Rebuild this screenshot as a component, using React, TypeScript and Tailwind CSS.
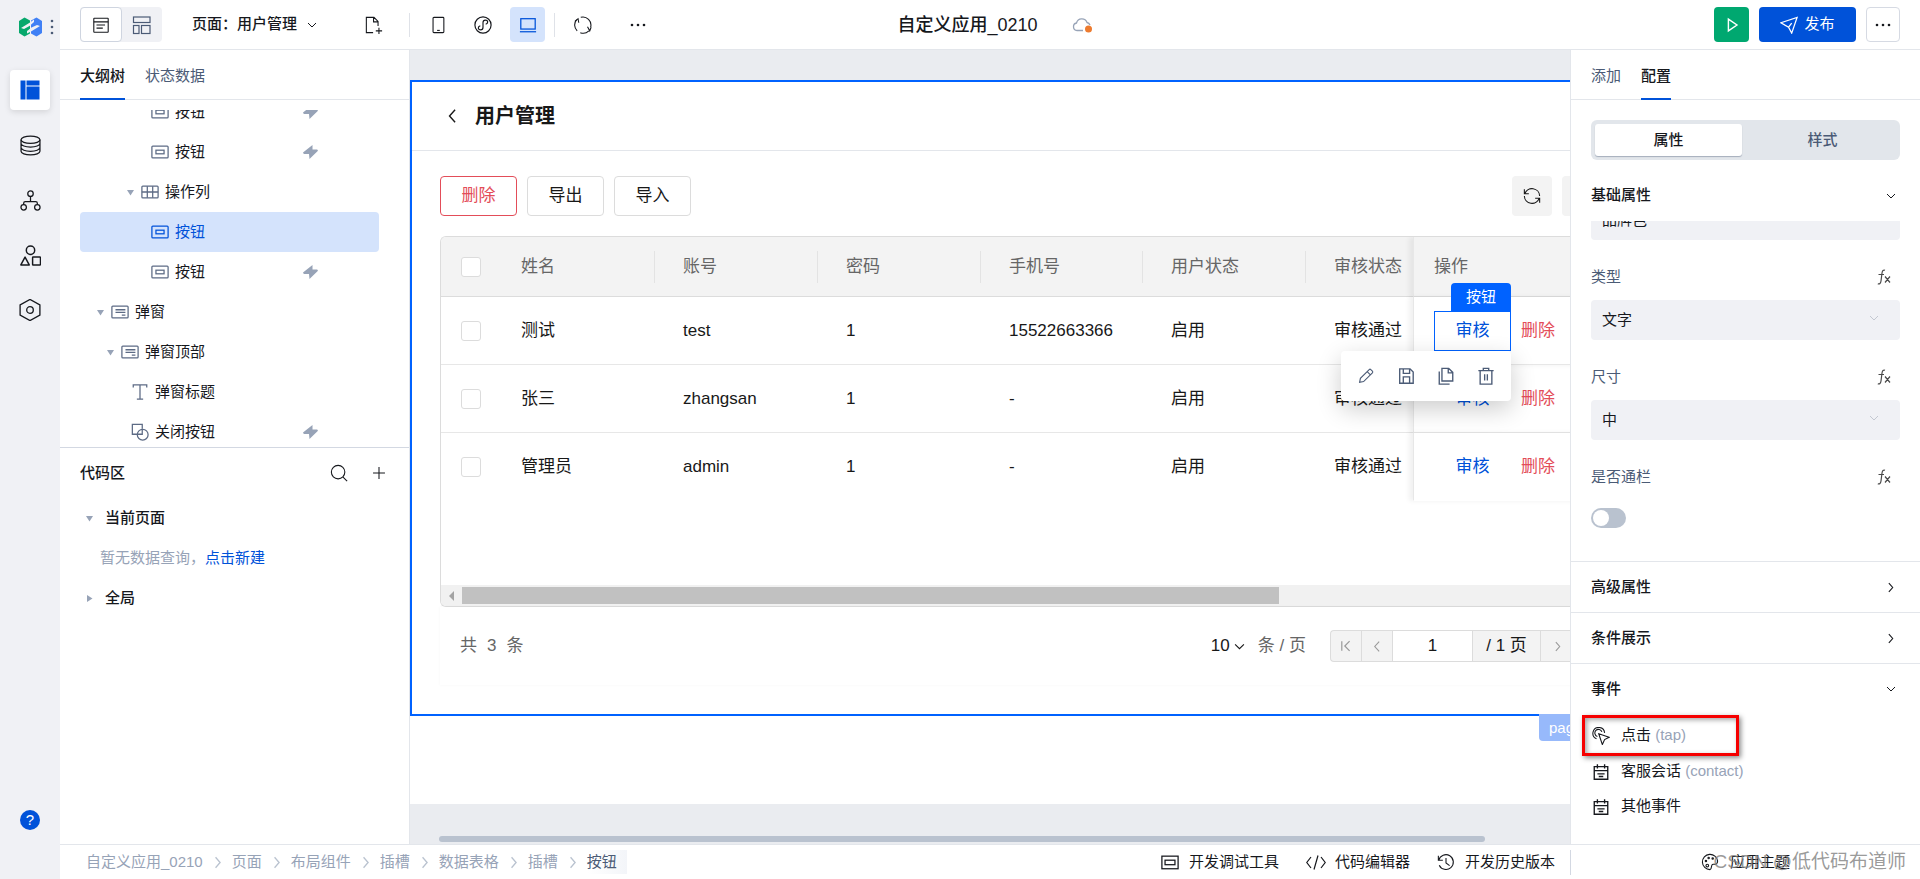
import { ReactNode } from "react";

type IconProps = {
  size?: number;
  width?: number;
  className?: string;
  children: ReactNode;
};

// every drawing uses a 20x20 canvas
function Icon({ size = 20, width = 1.2, className = "", children }: IconProps) {
  return (
    <svg
      width={size}
      height={size}
      viewBox="0 0 20 20"
      fill="none"
      stroke="currentColor"
      strokeWidth={width}
      className={`shrink-0 ${className}`}
      aria-hidden="true"
    >
      {children}
    </svg>
  );
}

function Chevron({ dir, size = 12, className = "" }: { dir: "down" | "right" | "left"; size?: number; className?: string }) {
  const paths = {
    down: "M2 6l8 8 8-8",
    right: "M7 2l7 8-7 8",
    left: "M13 1l-8 9 8 9",
  };
  return (
    <Icon size={size} width={2} className={className}>
      <path d={paths[dir]} />
    </Icon>
  );
}

const treeIcons: Record<string, ReactNode> = {
  button: (
    <>
      <rect x="1" y="3.500" width="18" height="13" rx="1" />
      <rect x="5.500" y="8" width="9" height="4" />
    </>
  ),
  table: (
    <>
      <rect x="1" y="3.500" width="18" height="13" rx="1" />
      <path d="M1 10h18M7 3.500v13M13 3.500v13" />
    </>
  ),
  modal: (
    <>
      <rect x="1" y="3.500" width="18" height="13" rx="1" />
      <path d="M5 7.500h11M5 10.500h11M12 13.500h4" />
    </>
  ),
  text: <path d="M2.500 5V2h15v3M10 2v16M6.500 18h7" />,
  shape: (
    <>
      <path d="M7 12.500H1.500v-11h11v5" />
      <circle cx="13" cy="13" r="6" />
      <path d="M7 12.500h5.500v-6" />
    </>
  ),
};

type TreeRow = {
  indent: string;
  icon: string;
  label: string;
  open?: boolean;
  event?: boolean;
  active?: boolean;
};

const treeRows: TreeRow[] = [
  { indent: "pl-[57px]", icon: "button", label: "按钮", event: true },
  { indent: "pl-[57px]", icon: "button", label: "按钮", event: true },
  { indent: "pl-[47px]", icon: "table", label: "操作列", open: true },
  { indent: "pl-[57px]", icon: "button", label: "按钮", active: true },
  { indent: "pl-[57px]", icon: "button", label: "按钮", event: true },
  { indent: "pl-[17px]", icon: "modal", label: "弹窗", open: true },
  { indent: "pl-[27px]", icon: "modal", label: "弹窗顶部", open: true },
  { indent: "pl-[37px]", icon: "text", label: "弹窗标题" },
  { indent: "pl-[37px]", icon: "shape", label: "关闭按钮", event: true },
];

const users = [
  { name: "测试", account: "test", password: "1", phone: "15522663366", status: "启用", audit: "审核通过" },
  { name: "张三", account: "zhangsan", password: "1", phone: "-", status: "启用", audit: "审核通过" },
  { name: "管理员", account: "admin", password: "1", phone: "-", status: "启用", audit: "审核通过" },
];

const columns = ["姓名", "账号", "密码", "手机号", "用户状态"];
const crumbs = ["自定义应用_0210", "页面", "布局组件", "插槽", "数据表格", "插槽"];

function Triangle({ open }: { open: boolean }) {
  return (
    <svg width="7" height="7" viewBox="0 0 7 7" className="shrink-0 fill-[#97a3b7]" aria-hidden="true">
      <path d={open ? "M0 1h7L3.500 6.500z" : "M1 0v7l5.500-3.500z"} />
    </svg>
  );
}

function Rail() {
  const item = "flex h-10 w-10 items-center justify-center rounded text-[#16181d]";
  return (
    <nav className="flex w-[60px] shrink-0 flex-col items-center bg-[#f0f1f5] pb-[13px]">
      <div className="flex h-[54px] w-full items-center pl-[19px]">
        <svg width="23" height="20" viewBox="0 0 23 20" aria-hidden="true">
          <path d="M0 4L5.500 .5 11 3.500v13l-5.500 3L0 16z" fill="#07a86c" />
          <path d="M12 16.500v-13l5.500-3L23 4v12l-5.500 3.500z" fill="#4080f5" />
          <path d="M2 11L11 5.500 15 2.500v2.500L10.500 9 5 12z" fill="#f0f1f5" />
          <path d="M8 16.500v-2.500L12.500 10.500 18 8l3 1-9 5.500z" fill="#f0f1f5" />
        </svg>
        <svg width="4" height="16" viewBox="0 0 4 16" className="ml-[8px] fill-[#4b5b76]" aria-hidden="true">
          <circle cx="2" cy="2" r="1.300" />
          <circle cx="2" cy="8" r="1.300" />
          <circle cx="2" cy="14" r="1.300" />
        </svg>
      </div>
      <div className="mt-4 flex flex-col gap-[15px]">
        <button aria-label="页面设计" className="flex h-10 w-10 items-center justify-center rounded bg-white shadow-[0_2px_6px_rgba(0,0,0,0.12)]">
          <svg width="20" height="20" viewBox="0 0 20 20" className="fill-[#0052d9]" aria-hidden="true">
            <path d="M.5.5h5v19h-5zM6.500.5h13v5h-13zM6.500 6.500h13v13h-13z" />
          </svg>
        </button>
        <button aria-label="数据源" className={item}>
          <Icon size={21}>
            <ellipse cx="10" cy="4.500" rx="9" ry="3.500" />
            <path d="M1 4.500v11c0 2 4 3.500 9 3.500s9-1.500 9-3.500v-11M1 8c0 2 4 3.500 9 3.500s9-1.500 9-3.500M1 12c0 2 4 3.500 9 3.500s9-1.500 9-3.500" />
          </Icon>
        </button>
        <button aria-label="流程" className={item}>
          <Icon size={21}>
            <circle cx="10" cy="3.500" r="2.600" />
            <circle cx="3.500" cy="16.500" r="2.600" />
            <circle cx="16.500" cy="16.500" r="2.600" />
            <path d="M10 6v5M3.500 14v-1.500Q3.500 11 5 11h10q1.500 0 1.500 1.500V14" />
          </Icon>
        </button>
        <button aria-label="组件" className={item}>
          <Icon size={21} width={1.4}>
            <circle cx="10" cy="5" r="4" />
            <path d="M4.800 11.500L.8 19h8z" strokeLinejoin="round" />
            <rect x="12" y="11.500" width="7.500" height="7.500" rx=".5" />
          </Icon>
        </button>
        <button aria-label="设置" className={item}>
          <Icon size={22}>
            <path d="M10 .4l9 4.900v9.400l-9 4.900-9-4.900V5.300z" />
            <circle cx="10" cy="10" r="3" />
          </Icon>
        </button>
      </div>
      <button aria-label="帮助" className="mt-auto flex h-[92px] w-10 items-center justify-center">
        <span className="flex h-5 w-5 items-center justify-center rounded-full bg-[#0052d9] text-[15px] leading-5 text-white">?</span>
      </button>
    </nav>
  );
}

function Dots() {
  return (
    <svg width="16" height="4" viewBox="0 0 16 4" className="fill-[#16181d]" aria-hidden="true">
      <circle cx="2" cy="2" r="1.300" />
      <circle cx="8" cy="2" r="1.300" />
      <circle cx="14" cy="2" r="1.300" />
    </svg>
  );
}

function TopBar() {
  const tool = "flex h-[35px] w-[35px] items-center justify-center rounded";
  return (
    <header className="flex h-[50px] shrink-0 items-center border-b border-[#e3e6eb] px-5">
      <div className="flex flex-1 items-center">
        <div className="flex rounded bg-[#f0f1f5]">
          <button aria-label="编辑" className="flex h-[35px] w-[42px] items-center justify-center rounded border border-[#cfd5e0] bg-white">
            <Icon size={18}>
              <rect x="2" y="2.500" width="16" height="15.500" rx=".5" />
              <path d="M2 6.500h16M5 10h9.500M5 13.500h7" />
            </Icon>
          </button>
          <button aria-label="布局" className="flex h-[35px] w-10 items-center justify-center text-[#4b5b76]">
            <Icon size={20}>
              <rect x="1.500" y="2" width="16.500" height="5.500" />
              <rect x="1.500" y="10.500" width="5.500" height="8" />
              <rect x="9.500" y="10.500" width="8.500" height="8" />
            </Icon>
          </button>
        </div>
        <button className="ml-[30px] flex items-center gap-[10px] text-[15px] font-medium">
          页面：用户管理
          <Chevron dir="down" size={10} />
        </button>
        <button aria-label="新建页面" className="ml-[39px] flex h-[35px] w-[35px] items-center justify-center">
          <Icon size={18}>
            <path d="M9 18.500H1.500v-17h8.500l4.500 4.500v5M9.500 1.500v5h5M15.500 13v7M12 16.500h7" />
          </Icon>
        </button>
        <span className="ml-[18px] h-6 w-px bg-[#dfe2e8]" />
        <button aria-label="手机" className={`ml-[10px] ${tool}`}>
          <Icon size={18}>
            <rect x="4.500" y="1.500" width="12" height="17" rx="1" />
            <path d="M9 16h3" />
          </Icon>
        </button>
        <button aria-label="小程序" className={`ml-[10px] ${tool}`}>
          <Icon size={18} width={1.300}>
            <circle cx="10" cy="10" r="9" />
            <path d="M10 7.500c0-1.800 1.200-3 2.600-3s2.600 1 2.600 2.300c0 1.400-1 2-2.200 2.400M10 7.500v5c0 1.800-1.200 3-2.600 3S4.800 14.500 4.800 13.200c0-1.400 1-2 2.200-2.400" />
          </Icon>
        </button>
        <button aria-label="电脑" className={`ml-[10px] bg-[#d4e3fc] text-[#0052d9] ${tool}`}>
          <Icon size={18} width={1.400}>
            <rect x="2" y="3" width="16" height="11.500" />
            <path d="M1 17.500h18" />
          </Icon>
        </button>
        <span className="ml-[9px] h-6 w-px bg-[#dfe2e8]" />
        <button aria-label="刷新" className={`ml-[10px] ${tool}`}>
          <Icon size={18}>
            <path d="M3.500 16.500A9 9 0 013 4M7.500 1.500a9 9 0 0111 11M16.500 16.500a9 9 0 01-9.500 2" />
            <path d="M1 6l3.500-3 .8 4.500M15 12l2.500 4.500 1.500-4" />
          </Icon>
        </button>
        <button aria-label="更多工具" className={`ml-5 ${tool}`}>
          <Dots />
        </button>
      </div>
      <div className="flex items-center gap-[34px] pl-[10px]">
        <h1 className="text-lg leading-6 font-medium">自定义应用_0210</h1>
        <svg width="21" height="18" viewBox="0 0 21 18" aria-hidden="true">
          <path d="M11 14.500H5A3.800 3.800 0 014.500 7 5.500 5.500 0 0115 6.500a4 4 0 013 2.500" fill="none" stroke="#97a3b7" strokeWidth="1.300" />
          <circle cx="16.500" cy="13" r="3.500" fill="#ed7b2f" />
        </svg>
      </div>
      <div className="flex flex-1 items-center justify-end gap-[10px]">
        <button aria-label="预览" className="flex h-[35px] w-[35px] items-center justify-center rounded bg-[#00a870] text-white">
          <Icon size={18} width={1.600}>
            <path d="M6 3.500v13L15.500 10z" />
          </Icon>
        </button>
        <button className="flex h-[35px] w-[97px] items-center justify-center gap-[6px] rounded bg-[#0052d9] text-[15px] text-white">
          <Icon size={18} width={1.400}>
            <path d="M1 7.500L19 1.500 13 19 9.500 12.500zM5 10l4.500 2.500L13 8" />
          </Icon>
          发布
        </button>
        <button aria-label="更多" className="flex h-[35px] w-[34px] items-center justify-center rounded border border-[#d6dae3]">
          <Dots />
        </button>
      </div>
    </header>
  );
}

function OutlinePanel() {
  return (
    <aside className="flex w-[350px] shrink-0 flex-col border-r border-[#e3e6eb]">
      <div className="flex h-[50px] shrink-0 gap-5 border-b border-[#e3e6eb] px-5 text-[15px]">
        <button className="-mb-px border-b-2 border-[#0052d9] pt-1 font-medium">大纲树</button>
        <button className="-mb-px border-b-2 border-transparent pt-1 text-[#4b5b76]">状态数据</button>
      </div>
      <div className="mt-[10px] h-[338px] shrink-0 overflow-hidden border-b border-[#d3d8e2] px-5">
        <ul className="-mt-[18px] w-[299px]">
          {treeRows.map((row, i) => (
            <li
              key={i}
              className={`flex h-10 items-center rounded text-[15px] ${row.indent} ${row.active ? "bg-[#d4e3fc] text-[#0052d9]" : ""}`}
            >
              <span className="w-[14px]">{row.open && <Triangle open />}</span>
              <Icon size={18} width={1.400} className={row.active ? "text-[#0052d9]" : "text-[#5d6b85]"}>
                {treeIcons[row.icon]}
              </Icon>
              <span className="ml-[6px]">{row.label}</span>
              {row.event && (
                <svg width="15" height="14" viewBox="0 0 15 14" className="mr-[61px] ml-auto fill-[#97a3b7]" aria-hidden="true">
                  <path d="M9.500 0L0 7.500l.8 1.500H6L6.500 14 15 5.800l-.8-1.300H9.500z" />
                </svg>
              )}
            </li>
          ))}
        </ul>
      </div>
      <div className="flex-1 px-5 text-[15px]">
        <div className="flex h-[50px] items-center">
          <h2 className="font-medium">代码区</h2>
          <button aria-label="搜索" className="ml-auto">
            <Icon size={18}>
              <circle cx="9" cy="9" r="7.500" />
              <path d="M14.500 14.500l4.500 4.500" />
            </Icon>
          </button>
          <button aria-label="新增" className="mr-[3px] ml-[24px]">
            <Icon size={14} width={1.500}>
              <path d="M10 1.500v17M1.500 10h17" />
            </Icon>
          </button>
        </div>
        <button className="flex h-10 w-full items-center gap-3 pl-[6px] font-medium">
          <Triangle open />
          当前页面
        </button>
        <p className="flex h-10 items-center pl-5 text-[#97a3b7]">
          暂无数据查询，
          <a href="#new" className="text-[#0052d9]">点击新建</a>
        </p>
        <button className="flex h-10 w-full items-center gap-3 pl-[6px] font-medium">
          <Triangle open={false} />
          全局
        </button>
      </div>
    </aside>
  );
}

function SelectedButton() {
  const action = "flex h-10 w-10 items-center justify-center text-[#4b5b76]";
  return (
    <span className="relative z-10 block">
      <button className="flex h-10 w-[77px] items-center justify-center border border-[#0062ff] text-[#0052d9]">审核</button>
      <span className="absolute right-0 bottom-full flex h-7 w-[60px] items-center justify-center rounded-t bg-[#0062ff] text-[15px] text-white">
        按钮
      </span>
      <span className="absolute top-full right-0 flex h-[50px] items-center rounded bg-white px-[5px] shadow-[0_8px_24px_rgba(0,0,0,0.2)]">
        <button aria-label="编辑" className={action}>
          <Icon size={16} width={1.400}>
            <path d="M2 18l1-5L14 2q1-1 2 0l2 2q1 1 0 2L7 17zM11.500 4.500l4 4" />
          </Icon>
        </button>
        <button aria-label="保存" className={action}>
          <Icon size={18} width={1.500}>
            <path d="M3 2h11.500l3.500 3.500v12.500H3zM7 2v5h7v-5M7 18v-7h7v7" />
          </Icon>
        </button>
        <button aria-label="复制" className={action}>
          <Icon size={18} width={1.500}>
            <path d="M5.500 1.500h7.500l4.500 4.500v9.500h-12zM12.500 1.500v5h5M2.500 5v14h11.500" />
          </Icon>
        </button>
        <button aria-label="删除" className={action}>
          <Icon size={18} width={1.500}>
            <path d="M1.500 4h17M7 4V1.500h6V4M3.500 4v15h13V4M8.500 8v7M11.500 8v7" />
          </Icon>
        </button>
      </span>
    </span>
  );
}

function Canvas() {
  const check = "block h-5 w-5 appearance-none rounded-[3px] border border-[#dcdcdc] bg-white";
  const fixed = "relative border-b shadow-[-4px_0_5px_rgba(0,0,0,0.06)] border-l border-l-[#e7e7e7] pl-5";
  const pager = "flex h-full items-center justify-center border-r border-[#dcdcdc]";
  return (
    <main className="flex min-w-0 flex-1 flex-col overflow-hidden bg-[#eaecf0] pt-[30px]">
      <div className="min-h-0 flex-1 bg-white">
        <section className="relative w-[calc(100%+24px)] border-2 border-[#0062ff] pb-[29px] text-[17px] leading-6 text-[#181818]">
          <div className="flex h-[69px] items-center border-b border-[#e3e6eb] pl-[34px]">
            <button aria-label="返回" className="mr-[15px]">
              <Chevron dir="left" size={14} />
            </button>
            <h2 className="text-xl font-bold">用户管理</h2>
          </div>
          <div className="flex gap-[10px] py-[25px] pl-[28px]">
            <button className="h-10 w-[77px] rounded border border-[#e34d59] text-[#e34d59]">删除</button>
            <button className="h-10 w-[77px] rounded border border-[#dcdcdc]">导出</button>
            <button className="h-10 w-[77px] rounded border border-[#dcdcdc]">导入</button>
            <button aria-label="刷新" className="ml-auto flex h-10 w-10 items-center justify-center rounded bg-[#f3f3f3]">
              <Icon size={18}>
                <path d="M1.500 2.500v5h5M18.500 17.500v-5h-5M2 7.500A8.500 8.500 0 0118.500 10M18 12.500A8.500 8.500 0 011.500 10" />
              </Icon>
            </button>
            <button aria-label="列设置" className="-mr-[10px] h-10 w-10 shrink-0 rounded bg-[#f3f3f3]" />
          </div>
          <div className="-mt-[5px] ml-[28px] overflow-hidden rounded-l-md border border-r-0 border-[#dcdcdc]">
            <div className="h-[348px] overflow-hidden">
              <table className="w-full table-fixed border-separate border-spacing-0 text-left">
                <colgroup>
                  <col className="w-[52px]" />
                  <col className="w-[162px]" />
                  <col className="w-[163px]" />
                  <col className="w-[163px]" />
                  <col className="w-[162px]" />
                  <col className="w-[163px]" />
                  <col className="w-[107px]" />
                  <col />
                </colgroup>
                <thead className="bg-[#f3f3f3] text-[#666]">
                  <tr className="h-[60px]">
                    <th className="border-b border-[#dcdcdc] pl-5">
                      <input type="checkbox" aria-label="全选" className={check} />
                    </th>
                    {columns.map((c) => (
                      <th key={c} className="border-b border-[#dcdcdc] font-normal">
                        <div className="border-r border-[#e3e3e3] py-1 pl-[28px]">{c}</div>
                      </th>
                    ))}
                    <th className="border-b border-[#dcdcdc] pl-[28px] font-normal whitespace-nowrap">审核状态</th>
                    <th className={`${fixed} border-b-[#dcdcdc] bg-[#f3f3f3] font-normal`}>操作</th>
                  </tr>
                </thead>
                <tbody>
                  {users.map((u, i) => {
                    const line = i < 2 ? "border-b-[#e7e7e7]" : "border-b-transparent";
                    return (
                      <tr key={u.name} className="h-[68px]">
                        <td className={`border-b pl-5 ${line}`}>
                          <input type="checkbox" aria-label={`选择${u.name}`} className={check} />
                        </td>
                        {[u.name, u.account, u.password, u.phone, u.status, u.audit].map((v, k) => (
                          <td key={k} className={`border-b pl-[28px] whitespace-nowrap ${line}`}>
                            {v}
                          </td>
                        ))}
                        <td className={`${fixed} ${line} bg-white ${i === 0 ? "z-10" : ""}`}>
                          <div className="flex items-center gap-[10px]">
                            {i === 0 ? <SelectedButton /> : <button className="h-10 w-[77px] text-[#0052d9]">审核</button>}
                            <button className="text-[#e34d59]">删除</button>
                          </div>
                        </td>
                      </tr>
                    );
                  })}
                </tbody>
              </table>
            </div>
            <div className="flex h-[21px] items-center bg-[#f1f1f1]">
              <svg width="21" height="10" viewBox="0 0 21 10" className="shrink-0 fill-[#a3a3a3]" aria-hidden="true">
                <path d="M13 0v10L8 5z" />
              </svg>
              <div className="h-[17px] w-[71%] bg-[#c1c1c1]" />
            </div>
          </div>
          <div className="ml-[28px] flex h-[78px] items-center pl-5 text-[#666] shadow-[0_0_3px_rgba(0,0,0,0.04)]">
            <span className="flex gap-[10px]">
              <span>共</span>
              <span>3</span>
              <span>条</span>
            </span>
            <label className="ml-auto flex items-center text-[#666]">
              <span className="relative flex items-center text-[#181818]">
                <select className="w-[34px] appearance-none" aria-label="每页条数" defaultValue="10">
                  <option>10</option>
                </select>
                <Chevron dir="down" size={11} className="pointer-events-none absolute right-0" />
              </span>
              <span className="ml-[13px]">条 / 页</span>
            </label>
            <div className="ml-[24px] flex h-8 shrink-0 items-center rounded-l border border-r-0 border-[#dcdcdc] bg-[#f3f3f3] text-[#181818]">
              <button aria-label="首页" className={`w-[31px] text-[#999] ${pager}`}>
                <Icon size={12} width={2}>
                  <path d="M3 2v16M16 2l-8 8 8 8" />
                </Icon>
              </button>
              <button aria-label="上一页" className={`w-[31px] text-[#999] ${pager}`}>
                <Chevron dir="left" size={11} />
              </button>
              <input aria-label="页码" defaultValue="1" className="h-full w-20 border-r border-[#dcdcdc] bg-white text-center" />
              <span className={`w-[68px] ${pager}`}>/ 1 页</span>
              <button aria-label="下一页" className="flex h-full w-[32px] items-center justify-center text-[#999]">
                <Chevron dir="right" size={11} />
              </button>
              <span className="w-[19px]" />
            </div>
          </div>
          <span className="absolute top-full right-0 flex h-[27px] w-[53px] items-center rounded-bl bg-[#97b9fb] pl-[10px] text-[15px] text-white">
            page
          </span>
        </section>
      </div>
      <div className="flex h-10 shrink-0 items-end pr-[85px] pb-[2px] pl-[29px]">
        <div className="h-[6px] flex-1 rounded-full bg-[#b9c2cf]" />
      </div>
    </main>
  );
}

function Fx() {
  return (
    <svg width="15" height="16" viewBox="0 0 15 16" fill="none" stroke="#4a4a4a" strokeWidth="1.200" aria-hidden="true">
      <path d="M8 1.200Q5.500 .3 5 4L4 12Q3.500 15.500 .8 14.800M1.500 5.500h5.500M8 7.500l5 6M13 7.500l-5 6" />
    </svg>
  );
}

function SelectField({ id, label, value }: { id: string; label: string; value: string }) {
  return (
    <div className="mb-[17px]">
      <div className="flex h-10 items-center justify-between pr-2">
        <label htmlFor={id} className="text-[#4b5b76]">{label}</label>
        <Fx />
      </div>
      <div className="relative mt-[3px]">
        <select id={id} className="h-10 w-full appearance-none rounded bg-[#f0f1f5] px-[11px]">
          <option>{value}</option>
        </select>
        <Chevron dir="down" size={10} className="pointer-events-none absolute top-[13px] right-[21px] text-[#c3c8d1]" />
      </div>
    </div>
  );
}

function EventIcon() {
  return (
    <Icon size={18} width={1.500}>
      <path d="M2.500 4h15v14h-15zM2.500 8.500h15M6 1.500V6M14 1.500V6M6 12h8M7.500 15h5" />
    </Icon>
  );
}

function ConfigPanel() {
  const head = "flex h-[51px] w-full items-center justify-between border-t border-[#e3e6eb] pr-6 pl-5 font-medium";
  return (
    <aside className="flex w-[350px] shrink-0 flex-col overflow-hidden border-l border-[#e3e6eb] text-[15px]">
      <div className="flex h-[50px] shrink-0 gap-5 border-b border-[#e3e6eb] px-5">
        <button className="-mb-px border-b-2 border-transparent pt-1 text-[#4b5b76]">添加</button>
        <button className="-mb-px border-b-2 border-[#0052d9] pt-1 font-medium">配置</button>
      </div>
      <div className="mx-5 mt-5 flex h-10 shrink-0 rounded-md bg-[#e2e6eb] p-1">
        <button className="w-[147px] rounded-[3px] bg-white font-medium shadow-[0_1px_1px_rgba(75,91,118,0.4)]">属性</button>
        <button className="flex-1 pl-[7px] font-medium text-[#4b5b76]">样式</button>
      </div>
      <button className="mt-[10px] flex h-[51px] shrink-0 items-center justify-between px-5 pr-6 font-medium">
        基础属性
        <Chevron dir="down" size={10} />
      </button>
      <div className="mx-5 flex h-[19px] shrink-0 items-end overflow-hidden">
        <select aria-label="颜色" className="h-10 w-full shrink-0 appearance-none rounded bg-[#f0f1f5] px-[11px]">
          <option>品牌色</option>
        </select>
      </div>
      <div className="mx-5 mt-[17px]">
        <SelectField id="type" label="类型" value="文字" />
        <SelectField id="size" label="尺寸" value="中" />
        <div className="flex h-10 items-center justify-between pr-2">
          <label htmlFor="block" className="text-[#4b5b76]">是否通栏</label>
          <Fx />
        </div>
        <input
          id="block"
          type="checkbox"
          role="switch"
          className="mt-[11px] mb-[33px] block h-5 w-[35px] appearance-none rounded-full bg-[#b9c2cf] p-[2px] before:block before:h-4 before:w-4 before:rounded-full before:bg-white"
        />
      </div>
      <button className={head}>
        高级属性
        <Chevron dir="right" size={11} />
      </button>
      <button className={head}>
        条件展示
        <Chevron dir="right" size={11} />
      </button>
      <button className={head}>
        事件
        <Chevron dir="down" size={10} />
      </button>
      <div className="px-[11px] pt-px">
        <button className="flex h-[41px] w-[157px] items-center gap-[11px] border-3 border-[#f60000] pl-[7px] shadow-[2px_2px_5px_rgba(0,0,0,0.45),inset_2px_2px_5px_rgba(0,0,0,0.35)]">
          <Icon size={18}>
            <path d="M7.500 7.500L19 11.500l-5 2.500-2.500 5.500zM5 13A6.500 6.500 0 1114 6.500M6 10.500a4 4 0 115-5" />
          </Icon>
          <span>
            点击 <span className="text-[#97a3b7]">(tap)</span>
          </span>
        </button>
        <button className="-mt-[2px] flex h-[35px] items-center gap-[11px] pl-[10px]">
          <EventIcon />
          <span>
            客服会话 <span className="text-[#97a3b7]">(contact)</span>
          </span>
        </button>
        <button className="flex h-[35px] items-center gap-[11px] pl-[10px]">
          <EventIcon />
          其他事件
        </button>
      </div>
    </aside>
  );
}

function StatusBar() {
  return (
    <footer className="relative flex h-[35px] shrink-0 items-center border-t border-[#e3e6eb] text-[15px]">
      <nav className="flex items-center pl-[26px] text-[#97a3b7]">
        {crumbs.map((c, i) => (
          <span key={i} className="flex items-center">
            <a href="#crumb">{c}</a>
            <Chevron dir="right" size={13} className="mx-2 text-[#b9c2cf]" />
          </span>
        ))}
        <span className="bg-linear-to-r from-white to-[#f3f5f9] py-px pr-[10px] text-[#4b5b76]">按钮</span>
      </nav>
      <div className="mr-[15px] ml-auto flex items-center gap-[27px]">
        <button className="flex items-center gap-[10px]">
          <Icon size={18} width={1.400}>
            <rect x="1" y="3.500" width="18" height="14" />
            <rect x="4.500" y="8" width="11" height="5" />
          </Icon>
          开发调试工具
        </button>
        <button className="flex items-center gap-[9px]">
          <Icon size={20}>
            <path d="M5 5L.8 10.500 5 16M15 5l4.200 5.500L15 16M12 3.500L8 17.500" />
          </Icon>
          代码编辑器
        </button>
        <button className="flex items-center gap-[10px]">
          <Icon size={18}>
            <path d="M1.500 3v5h5M2 8a8.200 8.200 0 11.500 5.500M10 5.500v5.500l4 3" />
          </Icon>
          开发历史版本
        </button>
      </div>
      <div className="flex h-[25px] w-[350px] shrink-0 items-center justify-center border-l border-[#d3d8e2]">
        <button className="flex items-center gap-[11px]">
          <Icon size={18}>
            <path d="M10 18.500A8.500 8.500 0 1118.500 9c0 4-3 3.500-5 3.500-3 0-1 6-3.500 6z" />
            <circle cx="5.500" cy="9" r=".8" />
            <circle cx="8.500" cy="5.500" r=".8" />
            <circle cx="13" cy="6" r=".8" />
            <circle cx="7" cy="14" r="1.500" />
          </Icon>
          应用主题
        </button>
      </div>
      <span className="pointer-events-none absolute right-[14px] text-[19px] whitespace-nowrap text-[#808080]/80">CSDN @低代码布道师</span>
    </footer>
  );
}

export default function App() {
  return (
    <div className="flex h-screen overflow-hidden bg-white font-['Liberation_Sans','Noto_Sans_CJK_SC',sans-serif] text-[#16181d]">
      <Rail />
      <div className="flex min-w-0 flex-1 flex-col">
        <TopBar />
        <div className="flex min-h-0 flex-1">
          <OutlinePanel />
          <Canvas />
          <ConfigPanel />
        </div>
        <StatusBar />
      </div>
    </div>
  );
}
